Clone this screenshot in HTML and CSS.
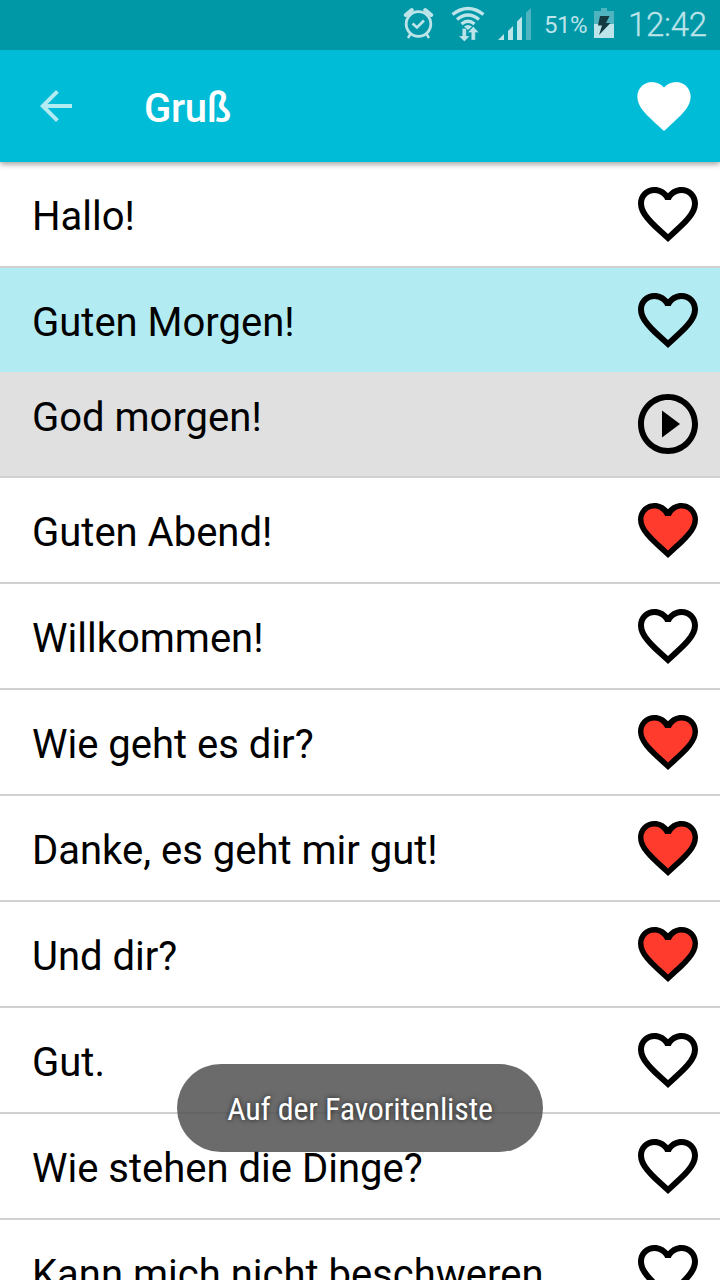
FILE: index.html
```html
<!DOCTYPE html>
<html lang="de">
<head>
<meta charset="utf-8">
<title>Gruß</title>
<link rel="stylesheet" href="styles.css">
</head>
<body>
<svg class="defs" aria-hidden="true">
  <symbol id="heart-outline" viewBox="0 0 24 24"><path d="M16.5 3c-1.74 0-3.41.81-4.5 2.09C10.910 3.810 9.240 3 7.500 3 4.420 3 2 5.420 2 8.500c0 3.780 3.400 6.860 8.550 11.540L12 21.350l1.450-1.320C18.600 15.360 22 12.280 22 8.500 22 5.420 19.580 3 16.500 3zm-4.400 15.550l-.1.1-.1-.1C7.140 14.240 4 11.390 4 8.500 4 6.500 5.500 5 7.500 5c1.540 0 3.040.99 3.570 2.360h1.870C13.460 5.990 14.960 5 16.500 5c2 0 3.500 1.500 3.500 3.500 0 2.890-3.140 5.740-7.900 10.050z"/></symbol>
  <symbol id="heart" viewBox="0 0 24 24"><path d="M12 21.350l-1.450-1.320C5.400 15.360 2 12.280 2 8.500 2 5.420 4.420 3 7.500 3c1.740 0 3.410.81 4.500 2.090C13.090 3.810 14.760 3 16.500 3 19.580 3 22 5.420 22 8.500c0 3.780-3.400 6.860-8.550 11.540L12 21.350z"/></symbol>
  <symbol id="heart-red" viewBox="0 0 24 24"><use href="#heart"/><path fill="#ff3b2d" d="M12 18.800C7.100 14.350 3.800 11.440 3.800 8.500 3.800 6.400 5.400 4.800 7.500 4.800c1.540 0 3.040 1.190 3.570 2.560h1.870C13.460 5.990 14.960 4.800 16.500 4.800c2.100 0 3.700 1.600 3.700 3.700 0 2.940-3.300 5.850-8.200 10.300z"/></symbol>
  <symbol id="play" viewBox="0 0 24 24"><path d="M10 16.500l6-4.500-6-4.500v9zM12 2C6.480 2 2 6.480 2 12s4.480 10 10 10 10-4.480 10-10S17.520 2 12 2zm0 18c-4.410 0-8-3.590-8-8s3.590-8 8-8 8 3.590 8 8-3.590 8-8 8z"/></symbol>
</svg>
<div class="screen">
  <header class="status">
    <svg class="alarm" width="32" height="34" viewBox="0 0 32 34" fill="none" stroke="#bde4e9"><circle cx="15.500" cy="19" r="12.300" stroke-width="2.800"/><path d="M9.500 18.500l4.500 4 7-7" stroke-width="2.700"/><path d="M2.800 10l6-5M28.200 10l-6-5" stroke-width="4" stroke-linecap="round"/><path d="M7.500 29l-2.500 4M23.500 29l2.500 4" stroke-width="2.500"/></svg>
    <svg class="wifi" width="34" height="36" viewBox="0 0 34 36"><g fill="none" stroke="#bde4e9" stroke-width="3.300"><path d="M1.500 9.500Q17-2.500 32.500 9.500"/><path d="M6 14.500Q17 5.500 28 14.500"/><path d="M10.500 19Q17 13.500 23.500 19"/></g><path fill="#bde4e9" d="M13 21.500q4-3 8 0L17 25z"/><path fill="#bde4e9" stroke="#0097a7" stroke-width=".3" d="M11.300 23.500h4v7.500h3.500L13.300 36.500 7.800 31h3.500zM20.300 35v-7.500h-3.500L22.300 21.500l5.500 6h-3.500V35z"/></svg>
    <svg class="signal" width="34" height="34" viewBox="0 0 34 34" fill="#bde4e9"><path d="M0 32L6 26v6zM10 32v-9l5-5v14zM19 32V13.500l5-5V32z"/><path fill="#4eb4bf" d="M28 32V4.500l5-4.500v32z"/></svg>
    <span class="percent">51%</span>
    <svg class="battery" width="20" height="30" viewBox="0 0 20 30"><path fill="#4eb4bf" d="M7 0h6v3h7v13H0V3h7z"/><path fill="#bde4e9" d="M0 16h20v14H0z"/><path fill="#123a40" d="M6 8h9.500l-3.500 7h4.500L5 27l3-9.500H4z"/></svg>
    <span class="clock">12:42</span>
  </header>
  <div class="appbar">
    <svg class="back" viewBox="0 0 24 24"><path d="M20 11H7.830l5.590-5.590L12 4l-8 8 8 8 1.410-1.410L7.830 13H20v-2z"/></svg>
    <h1 class="title">Gruß</h1>
    <svg class="favorites"><use href="#heart"/></svg>
  </div>
  <main class="list">
    <div class="row"><span class="phrase">Hallo!</span><svg class="icon"><use href="#heart-outline"/></svg></div>
    <div class="row selected"><span class="phrase">Guten Morgen!</span><svg class="icon"><use href="#heart-outline"/></svg></div>
    <div class="row translation"><span class="phrase">God morgen!</span><svg class="icon"><use href="#play"/></svg></div>
    <div class="row"><span class="phrase">Guten Abend!</span><svg class="icon"><use href="#heart-red"/></svg></div>
    <div class="row"><span class="phrase">Willkommen!</span><svg class="icon"><use href="#heart-outline"/></svg></div>
    <div class="row"><span class="phrase">Wie geht es dir?</span><svg class="icon"><use href="#heart-red"/></svg></div>
    <div class="row"><span class="phrase">Danke, es geht mir gut!</span><svg class="icon"><use href="#heart-red"/></svg></div>
    <div class="row"><span class="phrase">Und dir?</span><svg class="icon"><use href="#heart-red"/></svg></div>
    <div class="row"><span class="phrase">Gut.</span><svg class="icon"><use href="#heart-outline"/></svg></div>
    <div class="row"><span class="phrase">Wie stehen die Dinge?</span><svg class="icon"><use href="#heart-outline"/></svg></div>
    <div class="row"><span class="phrase">Kann mich nicht beschweren.</span><svg class="icon"><use href="#heart-outline"/></svg></div>
  </main>
  <div class="toast"><span class="toast-text">Auf der Favoritenliste</span></div>
</div>
</body>
</html>
```
FILE: styles.css
```css
* { box-sizing: border-box; }
body { margin: 0; font-family: Roboto, "Liberation Sans", sans-serif; color: #000; }
.defs { position: absolute; width: 0; height: 0; }
.screen { position: relative; width: 720px; height: 1280px; overflow: hidden; background: #fff; display: flex; flex-direction: column; }
svg { display: block; flex: none; }
.status { height: 50px; flex: none; z-index: 2; background: #0097a7; color: #bde4e9; display: flex; align-items: flex-start; padding-left: 403px; }
.alarm { margin-top: 5px; }
.wifi { margin: 5px 0 0 16px; overflow: visible; }
.signal { margin: 8px 0 0 13px; }
.percent { width: 50px; margin-left: 12px; font-size: 24px; line-height: 50px; letter-spacing: -0.5px; white-space: nowrap; }
.battery { margin-top: 8px; }
.clock { margin-left: 14px; font-size: 33px; font-weight: 300; line-height: 50px; letter-spacing: -0.3px; white-space: nowrap; -webkit-text-stroke: 0.3px #bde4e9; }
.appbar { height: 112px; flex: none; background: #00bcd7; display: flex; align-items: center; padding: 0 24px 0 32px; box-shadow: 0 2px 6px rgba(0, 0, 0, 0.4); z-index: 1; }
.back { width: 48px; height: 48px; fill: #b2ebf2; }
.title { flex: 1; margin: 0; padding: 6px 0 0 64px; font-size: 40px; line-height: 48px; font-weight: 500; letter-spacing: -0.3px; color: #fff; }
.favorites { width: 64px; height: 64px; fill: #fff; }
.list { flex: none; }
.row { height: 106px; display: flex; align-items: center; justify-content: space-between; padding: 0 16px 0 32px; border-bottom: 2px solid #d0d0d0; background: #fff; }
.row.selected { height: 104px; background: #b2ebf2; border-bottom: 0; }
.row.translation { background: #e0e0e0; }
.phrase { font-size: 40px; line-height: 48px; padding-top: 6px; white-space: nowrap; }
.translation .phrase { padding: 0 0 12px; }
.icon { width: 72px; height: 72px; }
.toast { position: absolute; left: 177px; top: 1064px; width: 366px; height: 88px; border-radius: 44px; background: rgba(85, 85, 85, 0.87); z-index: 2; display: flex; align-items: center; justify-content: center; }
.toast-text { font-family: "Roboto Condensed", Roboto, sans-serif; font-size: 32px; color: #fff; white-space: nowrap; padding-top: 2px; text-shadow: 0 0 5px rgba(0, 0, 0, 0.7); letter-spacing: -0.18px; }
```
